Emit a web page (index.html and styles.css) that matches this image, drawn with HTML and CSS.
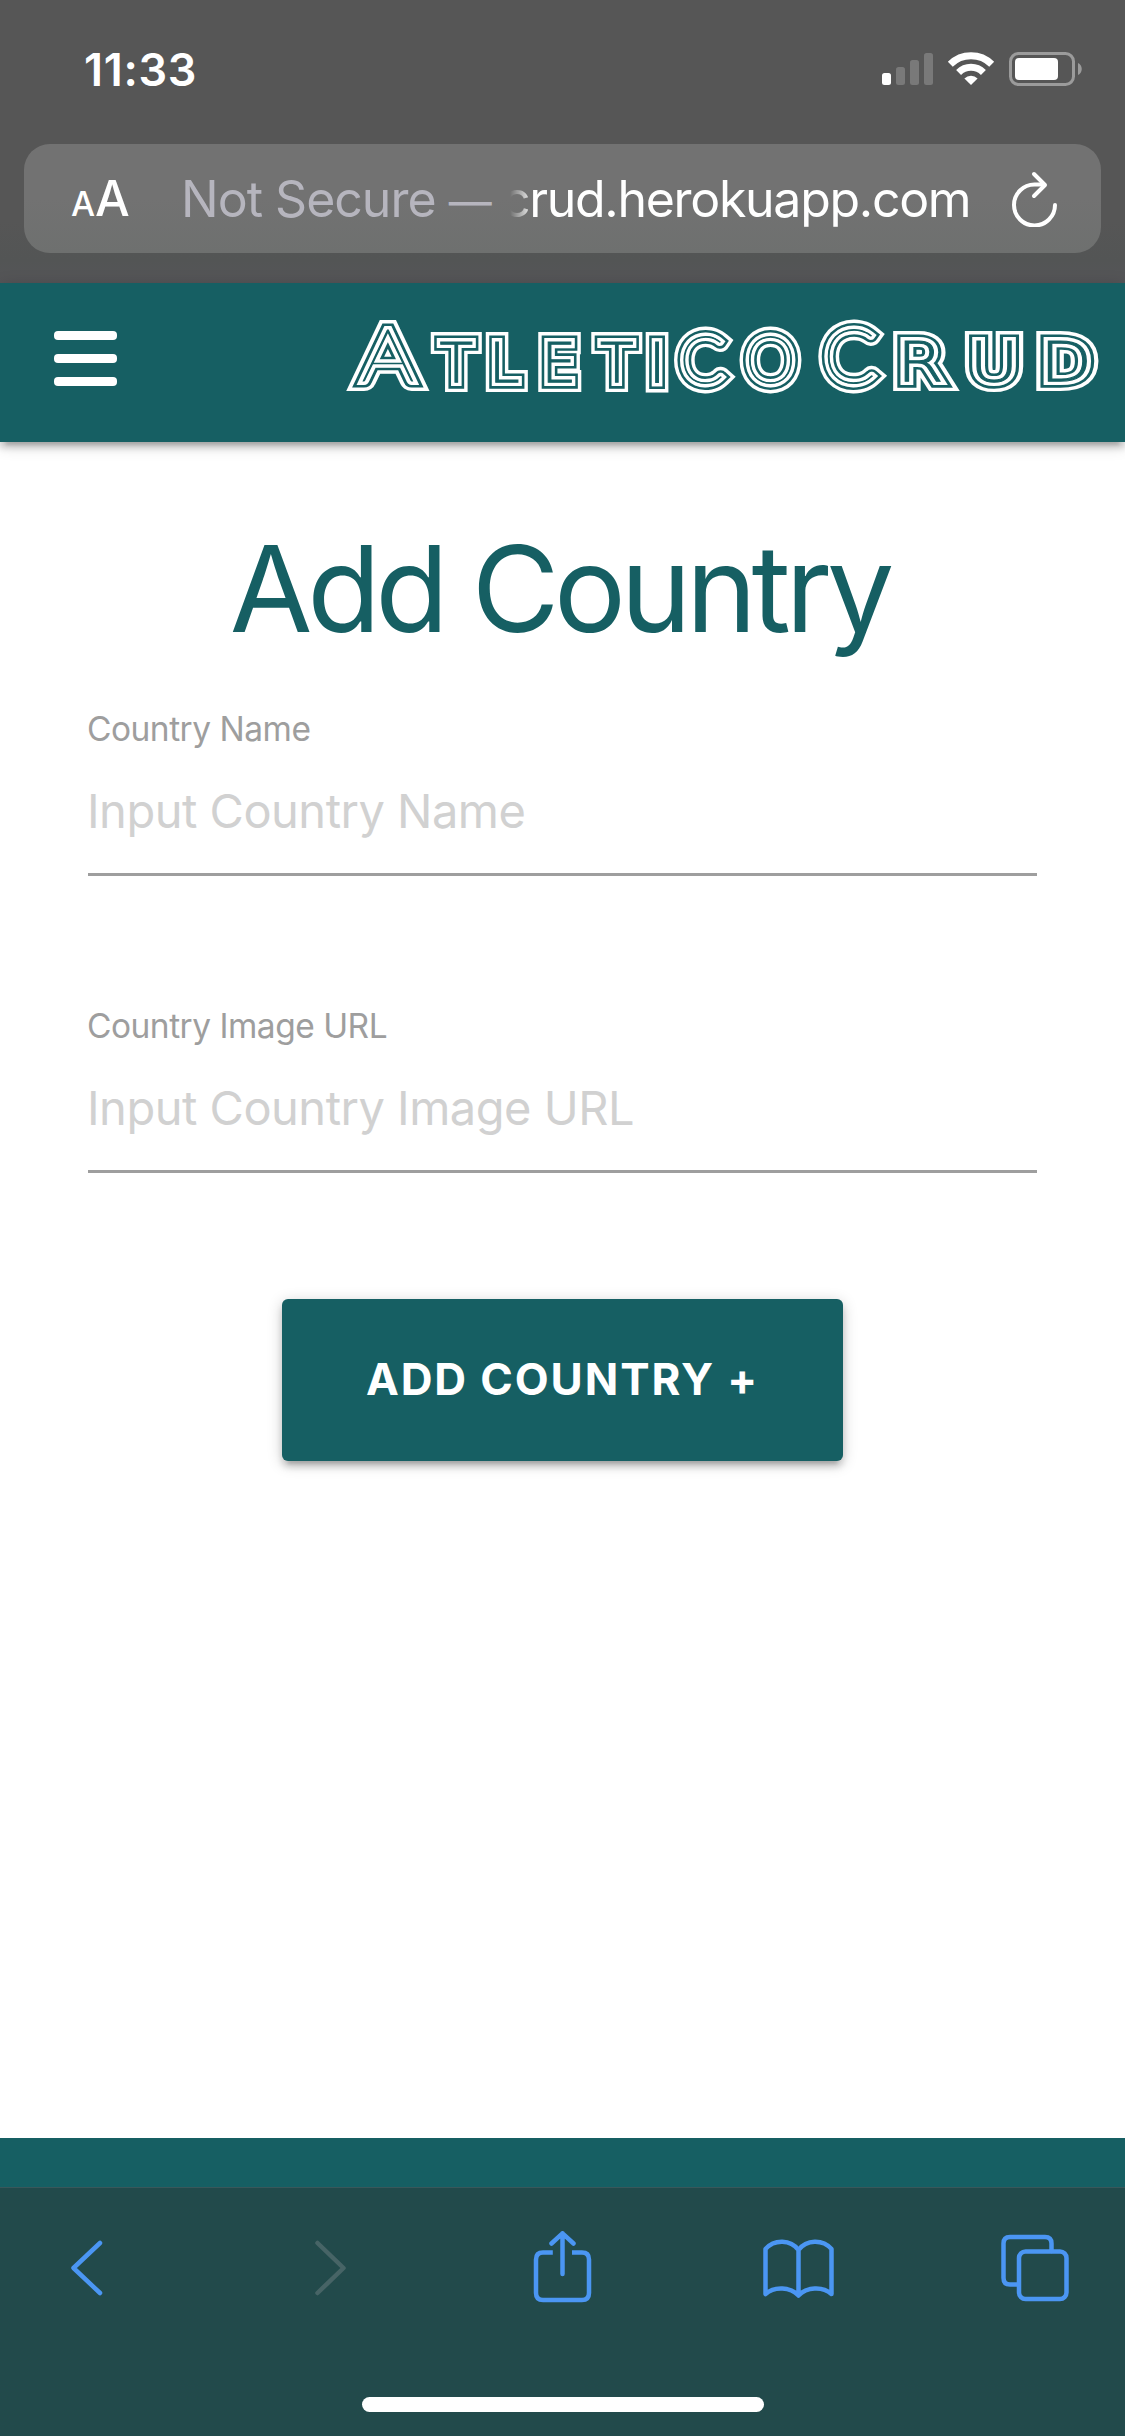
FILE: index.html
```html
<!DOCTYPE html>
<html lang="en">
<head>
<meta charset="utf-8">
<title>Atletico Crud</title>
<link rel="stylesheet" href="styles.css">
</head>
<body>
<div class="screen">
  <div class="chrome-top">
    <div class="status">
      <span class="time">11:33</span>
      <svg class="status-icons" width="202" height="36" viewBox="881 51 202 36">
        <g fill="#797979">
          <rect x="896" y="67" width="9" height="18" rx="2.5"/>
          <rect x="910" y="60" width="9" height="25" rx="2.5"/>
          <rect x="924" y="53" width="9" height="32" rx="2.5"/>
        </g>
        <rect x="882" y="73" width="9" height="12" rx="2.5" fill="#fff"/>
        <g fill="none" stroke="#fff" stroke-width="7">
          <path d="M950.3 64.2a29.5 29.5 0 0 1 41.4 0"/>
          <path d="M958.6 72.4a17.6 17.6 0 0 1 24.8 0"/>
        </g>
        <path d="M971 85l-6.6-6.6a9.5 9.5 0 0 1 13.2 0z" fill="#fff"/>
        <rect x="1010.5" y="53.5" width="63" height="31" rx="8" fill="none" stroke="#9b9b9b" stroke-width="3"/>
        <rect x="1015" y="58" width="43" height="22" rx="4" fill="#fff"/>
        <path d="M1078 63c5 2 5 10 0 12z" fill="#9b9b9b"/>
      </svg>
    </div>
    <div class="address">
      <span class="text-size"><span class="small-a">A</span><span class="big-a">A</span></span>
      <span class="insecure">Not Secure <span class="dash">—</span></span>
      <span class="host">crud.herokuapp.com</span>
      <svg class="reload" width="46" height="56" viewBox="1011 168 46 56" fill="none" stroke="#fff" stroke-width="4" stroke-linecap="round" stroke-linejoin="round">
        <path d="M1055 202a20.500 20.500 0 1 1-20.500-20.500h9"/>
        <path d="M1034 171l11 11-11 11"/>
      </svg>
    </div>
  </div>

  <header class="nav">
    <div class="menu"><i></i><i></i><i></i></div>
    <svg class="logo" width="765" height="100" viewBox="345 304 765 100">
      <g class="line-4">
        <g id="brand">
          <text y="380.500" transform="translate(361.500 0) scale(1.150 1)" class="cap-a">A</text>
          <text y="380.500" x="439.500 489 541.500 600 649 679.500 745">TLETI<tspan class="round" dy="1.500">CO</tspan></text>
          <text y="382" x="823" class="cap-c">C</text>
          <text y="380.500" x="0 59.500 117.500" transform="translate(897 0) scale(1.220 1)">RUD</text>
        </g>
      </g>
      <use href="#brand" class="line-3"/>
      <use href="#brand" class="line-2"/>
      <use href="#brand" class="line-1"/>
    </svg>
  </header>

  <main>
    <h1>Add Country</h1>
    <form>
      <div class="field">
        <label for="name">Country Name</label>
        <input id="name" type="text" placeholder="Input Country Name">
      </div>
      <div class="field">
        <label for="image">Country Image URL</label>
        <input id="image" type="text" placeholder="Input Country Image URL">
      </div>
      <button type="button">ADD COUNTRY +</button>
    </form>
  </main>

  <footer></footer>

  <div class="toolbar">
    <div class="tools">
      <svg width="78" height="74" viewBox="59 2231 78 74"><path d="M100 2243l-26.500 25 26.500 25"/></svg>
      <svg class="off" width="78" height="74" viewBox="293 2231 78 74"><path d="M317.500 2243l26 25-26 25"/></svg>
      <svg width="78" height="74" viewBox="527 2231 78 74">
        <path stroke-linecap="butt" d="M552.800 2252.500H543q-7 0-7 7V2293q0 7 7 7H582q7 0 7-7V2259.500q0-7-7-7H572"/>
        <path d="M562.500 2274V2233.300M551.500 2243.500l11-10.200 11 10.200"/>
      </svg>
      <svg width="78" height="74" viewBox="761 2231 78 74">
        <path d="M765.500 2249c9-10 25-9.500 33 1 8-10.500 24-11 33-1V2294c-9-8-25-7-33 1.500-8-8.500-24-9.500-33-1.500zM798.500 2250v45"/>
      </svg>
      <svg width="78" height="74" viewBox="995 2231 78 74">
        <path d="M1018 2284.500h-8q-6.500 0-6.500-6.500V2243.500q0-6.500 6.500-6.500h35q6.500 0 6.500 6.500V2251"/>
        <rect x="1019" y="2251.500" width="47.500" height="47.500" rx="6.500"/>
      </svg>
    </div>
    <div class="home"></div>
  </div>
</div>
</body>
</html>
```
FILE: styles.css
```css
* { box-sizing: border-box; }

body {
  margin: 0;
  font-family: Inter, "Liberation Sans", sans-serif;
  background: #fff;
}

.screen {
  width: 1125px;
  height: 2436px;
  display: flex;
  flex-direction: column;
  overflow: hidden;
}

/* Browser chrome, top */
.chrome-top {
  height: 283px;
  flex: none;
  background: linear-gradient(#565656 0, #565656 220px, #535555 260px, #555558 283px);
}

.status {
  height: 144px;
  padding: 0 42px 6px 84px;
  display: flex;
  justify-content: space-between;
  align-items: center;
}

.time {
  color: #fff;
  font-size: 45px;
  font-weight: 600;
  letter-spacing: 0.7px;
}

.address {
  height: 109px;
  margin: 0 24px;
  padding: 0 44px 0 47px;
  display: flex;
  align-items: center;
  border-radius: 26px;
  background: linear-gradient(#727272 50%, #6e706f);
  color: #fff;
  font-size: 50px;
  white-space: nowrap;
}

.text-size {
  width: 110px;
  display: flex;
  align-items: baseline;
}

.small-a { font-size: 34px; font-weight: 500; }
.big-a { font-size: 49px; font-weight: 500; }

.insecure {
  width: 321px;
  color: #b6b5be;
  letter-spacing: -1px;
}

.dash {
  font-size: 43px;
  line-height: 1;
}

.host {
  width: 509px;
  letter-spacing: -1.3px;
  -webkit-mask-image: linear-gradient(90deg, transparent 8px, #000 32px);
  mask-image: linear-gradient(90deg, transparent 8px, #000 32px);
}

/* Site header */
.nav {
  height: 159px;
  flex: none;
  position: relative;
  display: flex;
  justify-content: space-between;
  padding: 22px 15px 0 54px;
  background: #165f63;
  box-shadow: 0 6px 6px 0 rgba(0, 0, 0, .14), 0 9px 3px -6px rgba(0, 0, 0, .12), 0 3px 15px 0 rgba(0, 0, 0, .2);
}

.menu {
  width: 63px;
  height: 55px;
  margin-top: 26px;
  display: flex;
  flex-direction: column;
  justify-content: space-between;
}

.menu i {
  height: 9px;
  border-radius: 4px;
  background: #fff;
}

.logo text {
  font-family: "DejaVu Sans", sans-serif;
  font-weight: 200;
  font-size: 55px;
}

.logo .round,
.logo .cap-a,
.logo .cap-c {
  font-family: Lato, sans-serif;
  font-weight: 100;
}

.logo .round { font-size: 65px; }
.logo .cap-a { font-size: 72px; }
.logo .cap-c { font-size: 77px; }

/* Nested outlines that turn each letter into four parallel lines */
.line-4, .line-2 { fill: #fff; stroke: #fff; }
.line-3, .line-1 { fill: #165f63; stroke: #165f63; }
.line-4, .line-3, .line-2, .line-1 { stroke-linejoin: miter; stroke-miterlimit: 2; }
.line-4 { stroke-width: 19.8; }
.line-3 { stroke-width: 13; }
.line-2 { stroke-width: 7.8; }
.line-1 { stroke-width: 1; }

/* Page */
main {
  flex: 1;
  padding: 0 88px;
}

h1 {
  margin: 77px 0 0;
  padding-right: 6px;
  height: 140px;
  line-height: 140px;
  font-size: 120px;
  font-weight: 400;
  letter-spacing: -5.4px;
  text-align: center;
  color: #165f63;
}

form {
  margin-top: 48px;
  display: flex;
  flex-direction: column;
  align-items: center;
}

.field {
  width: 949px;
  height: 169px;
  margin-bottom: 128px;
  display: flex;
  flex-direction: column;
}

label {
  height: 44px;
  line-height: 44px;
  font-size: 33.500px;
  letter-spacing: -0.5px;
  text-indent: -1px;
  color: #9e9e9e;
}

input {
  height: 125px;
  padding: 0 0 4px;
  border: 0;
  border-bottom: 3px solid #9e9e9e;
  outline: 0;
  background: none;
  font: 47px Inter, sans-serif;
  letter-spacing: -0.5px;
  text-indent: -1px;
}

input::placeholder { color: #d1d1d1; opacity: 1; }

button {
  width: 561px;
  height: 162px;
  margin-top: -2px;
  padding: 0 0 2px;
  border: 0;
  border-radius: 6px;
  background: #165f63;
  color: #fff;
  font: 650 44px Inter, sans-serif;
  letter-spacing: 1.900px;
  box-shadow: 0 6px 6px 0 rgba(0, 0, 0, .14), 0 9px 3px -6px rgba(0, 0, 0, .12), 0 3px 15px 0 rgba(0, 0, 0, .2);
}

footer {
  height: 49px;
  flex: none;
  background: #165f63;
}

/* Browser chrome, bottom */
.toolbar {
  height: 249px;
  flex: none;
  display: flex;
  flex-direction: column;
  align-items: center;
  background: #224a4b;
  border-top: 1px solid #38585b;
}

.tools {
  width: 100%;
  height: 209px;
  padding: 0 52px 49px 59px;
  display: flex;
  justify-content: space-between;
  align-items: center;
}

.tools svg {
  fill: none;
  stroke: #4b96f3;
  stroke-width: 4.500;
  stroke-linecap: round;
  stroke-linejoin: round;
}

.tools .off { stroke: #476466; }

.home {
  width: 402px;
  height: 15px;
  border-radius: 8px;
  background: #fff;
}
```
